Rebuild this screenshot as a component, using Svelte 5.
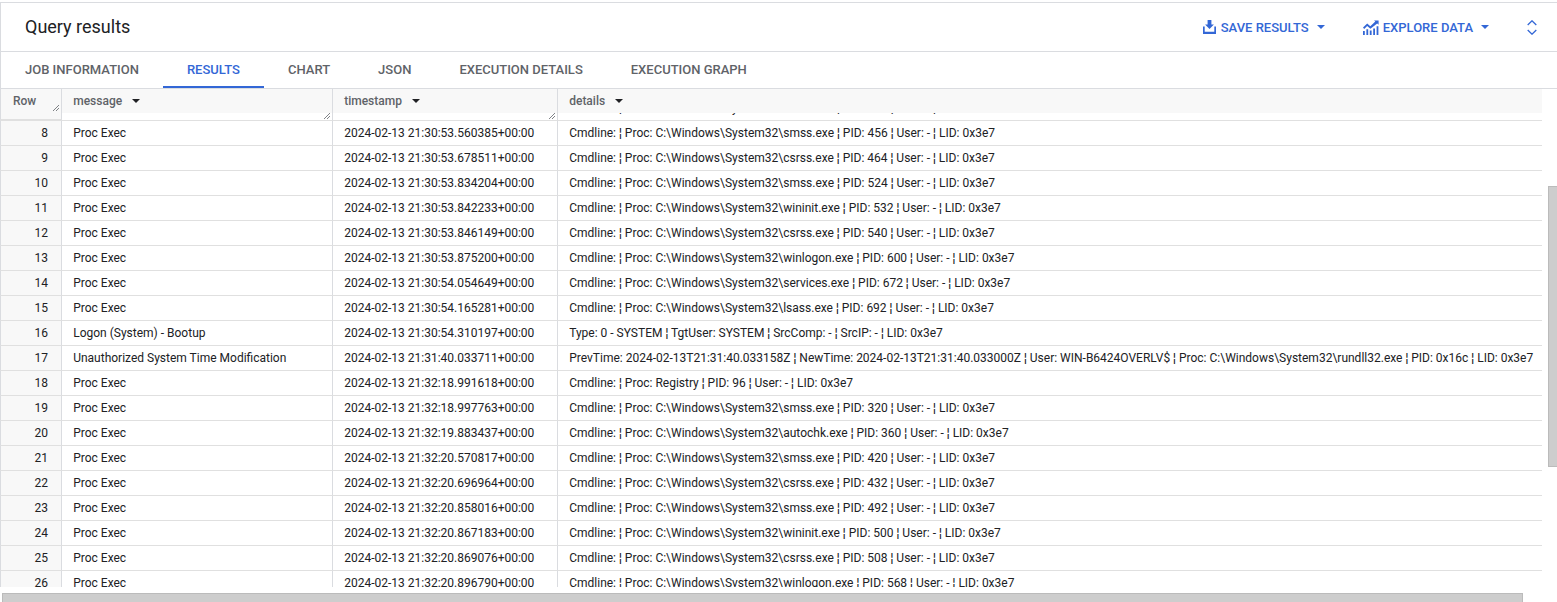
<script>
  const proc = (name, pid) => `Cmdline: ¦ Proc: ${name} ¦ PID: ${pid} ¦ User: - ¦ LID: 0x3e7`;
  const sys = name => `C:\\Windows\\System32\\${name}.exe`;

  const tabs = ["JOB INFORMATION", "RESULTS", "CHART", "JSON", "EXECUTION DETAILS", "EXECUTION GRAPH"];
  const columns = ["message", "timestamp", "details"];

  const rows = [
    [7, "Proc Exec", "2024-02-13 21:30:53.412907+00:00", proc(sys("smss"), 384)],
    [8, "Proc Exec", "2024-02-13 21:30:53.560385+00:00", proc(sys("smss"), 456)],
    [9, "Proc Exec", "2024-02-13 21:30:53.678511+00:00", proc(sys("csrss"), 464)],
    [10, "Proc Exec", "2024-02-13 21:30:53.834204+00:00", proc(sys("smss"), 524)],
    [11, "Proc Exec", "2024-02-13 21:30:53.842233+00:00", proc(sys("wininit"), 532)],
    [12, "Proc Exec", "2024-02-13 21:30:53.846149+00:00", proc(sys("csrss"), 540)],
    [13, "Proc Exec", "2024-02-13 21:30:53.875200+00:00", proc(sys("winlogon"), 600)],
    [14, "Proc Exec", "2024-02-13 21:30:54.054649+00:00", proc(sys("services"), 672)],
    [15, "Proc Exec", "2024-02-13 21:30:54.165281+00:00", proc(sys("lsass"), 692)],
    [16, "Logon (System) - Bootup", "2024-02-13 21:30:54.310197+00:00", "Type: 0 - SYSTEM ¦ TgtUser: SYSTEM ¦ SrcComp: - ¦ SrcIP: - ¦ LID: 0x3e7"],
    [17, "Unauthorized System Time Modification", "2024-02-13 21:31:40.033711+00:00", `PrevTime: 2024-02-13T21:31:40.033158Z ¦ NewTime: 2024-02-13T21:31:40.033000Z ¦ User: WIN-B6424OVERLV$ ¦ Proc: ${sys("rundll32")} ¦ PID: 0x16c ¦ LID: 0x3e7`],
    [18, "Proc Exec", "2024-02-13 21:32:18.991618+00:00", proc("Registry", 96)],
    [19, "Proc Exec", "2024-02-13 21:32:18.997763+00:00", proc(sys("smss"), 320)],
    [20, "Proc Exec", "2024-02-13 21:32:19.883437+00:00", proc(sys("autochk"), 360)],
    [21, "Proc Exec", "2024-02-13 21:32:20.570817+00:00", proc(sys("smss"), 420)],
    [22, "Proc Exec", "2024-02-13 21:32:20.696964+00:00", proc(sys("csrss"), 432)],
    [23, "Proc Exec", "2024-02-13 21:32:20.858016+00:00", proc(sys("smss"), 492)],
    [24, "Proc Exec", "2024-02-13 21:32:20.867183+00:00", proc(sys("wininit"), 500)],
    [25, "Proc Exec", "2024-02-13 21:32:20.869076+00:00", proc(sys("csrss"), 508)],
    [26, "Proc Exec", "2024-02-13 21:32:20.896790+00:00", proc(sys("winlogon"), 568)],
  ];
</script>

<div class="page">
  <header class="title-bar">
    <h2>Query results</h2>
    <div class="actions">
      <button class="action save">
        <svg width="13" height="14" viewBox="0 0 13 14">
          <path d="M4.6 0h3.8v4.4h2.5L6.5 8.9 2.1 4.4h2.5z" />
          <path d="M0 6.5h1.7v5.3h9.6V6.5H13V14H0z" />
        </svg>
        SAVE RESULTS
        <span class="caret"></span>
      </button>
      <button class="action explore">
        <svg width="16" height="15" viewBox="0 0 16 15">
          <path d="M0 7.6l4.2-4 3.1 2.6L12.3 1.6 11 .4h4.6v4.4l-1.4-1.4-6.8 5.4-3.2-2.7L1.2 9z" />
          <path d="M0 11h1.8v4H0zM3.4 9.2h1.8V15H3.4zM6.8 10.4h1.8V15H6.8zM10.200 8.600h1.800V15h-1.800zM13.600 6.200h1.800V15h-1.800z" />
        </svg>
        EXPLORE DATA
        <span class="caret"></span>
      </button>
      <button class="unfold" aria-label="Expand">
        <svg width="10" height="15" viewBox="0 0 10 15">
          <path d="M.7 5L5 .8 9.300 5M.7 10L5 14.200 9.300 10" />
        </svg>
      </button>
    </div>
  </header>

  <nav class="tabs">
    {#each tabs as tab}
      <div class="tab" class:active={tab === "RESULTS"}>{tab}</div>
    {/each}
  </nav>

  <div class="table">
    <div class="row head">
      <div class="cell num">
        Row
        <svg class="grip" width="6" height="6" viewBox="0 0 6 6"><path d="M0 6L6 0M3 6L6 3" /></svg>
      </div>
      {#each columns as col, i}
        <div class="cell">
          {col}<span class="caret dark"></span>
          {#if i < 2}
            <svg class="grip" width="6" height="6" viewBox="0 0 6 6"><path d="M0 6L6 0M3 6L6 3" /></svg>
          {/if}
        </div>
      {/each}
    </div>
    <div class="body">
      <div class="rows">
        {#each rows as [n, message, timestamp, details]}
          <div class="row">
            <div class="cell num">{n}</div>
            <div class="cell">{message}</div>
            <div class="cell">{timestamp}</div>
            <div class="cell">{details}</div>
          </div>
        {/each}
      </div>
    </div>
  </div>

  <div class="scrollbar vertical"></div>
  <div class="scrollbar horizontal"></div>
</div>

<style>
  :global(body) {
    margin: 0;
    background: #fff;
  }

  .page {
    position: relative;
    width: 1557px;
    height: 602px;
    overflow: hidden;
    box-sizing: border-box;
    padding-top: 2px;
    font-family: Roboto, "Liberation Sans", sans-serif;
    font-size: 12px;
    color: #202124;
  }

  .title-bar {
    display: flex;
    align-items: center;
    justify-content: space-between;
    height: 48px;
    border-top: 1px solid #dadce0;
    border-bottom: 1px solid #dadce0;
    border-left: 1px solid #dadce0;
    padding-left: 24px;
  }

  h2 {
    margin: 0 0 2px;
    font-size: 18px;
    font-weight: 400;
    color: #202124;
  }

  .actions {
    display: flex;
    align-items: center;
    padding-right: 20px;
  }

  button {
    display: flex;
    align-items: center;
    border: none;
    background: none;
    padding: 0;
    font: inherit;
    font-size: 13px;
    font-weight: 500;
    color: #3367d6;
  }

  button svg {
    fill: #3367d6;
  }

  .action svg {
    margin-right: 5px;
  }

  .action .caret {
    margin-left: 8px;
  }

  .save,
  .explore {
    margin-right: 38px;
  }

  .explore svg {
    margin-right: 4px;
  }

  .unfold svg {
    fill: none;
    stroke: #3367d6;
    stroke-width: 1.3;
  }

  .caret {
    display: inline-block;
    width: 0;
    height: 0;
    border-left: 4px solid transparent;
    border-right: 4px solid transparent;
    border-top: 4px solid #3367d6;
  }

  .caret.dark {
    border-top-color: #202124;
    margin-left: 10px;
    vertical-align: 2px;
  }

  .tabs {
    display: flex;
    height: 36px;
    border-left: 1px solid #dadce0;
    border-bottom: 1px solid #dadce0;
  }

  .tab {
    box-sizing: border-box;
    height: 36px;
    padding: 0 24px;
    line-height: 36px;
    font-size: 13px;
    font-weight: 500;
    color: #5f6368;
  }

  .tab.active {
    color: #3367d6;
    border-bottom: 2px solid #3367d6;
  }

  .table {
    width: 1542px;
  }

  .row {
    display: grid;
    grid-template-columns: 62px 271px 225px 984px;
    height: 25px;
  }

  .cell {
    position: relative;
    box-sizing: border-box;
    padding-left: 11.2px;
    border-right: 1px solid #dadce0;
    border-bottom: 1px solid #e0e0e0;
    line-height: 24px;
    white-space: nowrap;
    overflow: hidden;
  }

  .cell:last-child {
    border-right: none;
  }

  .cell.num {
    padding: 0 13px 0 0;
    text-align: right;
    background: #f8f8f8;
    border-left: 1px solid #dadce0;
  }

  .head {
    height: 24px;
    background: #f8f8f8;
    font-weight: 500;
    color: #5f6368;
  }

  .head .cell {
    border-bottom: none;
  }

  .head .cell.num {
    padding: 0 0 0 12px;
    text-align: left;
    overflow: visible;
    height: 31px;
    border-bottom: 1px solid #e0e0e0;
    z-index: 1;
  }

  .grip {
    position: absolute;
    right: 2px;
    bottom: 1px;
    fill: none;
    stroke: #5f6368;
    stroke-width: 0.8;
  }

  .head .num .grip {
    bottom: 8px;
  }

  .body {
    height: 474px;
    overflow: hidden;
  }

  .rows {
    margin-top: -17px;
  }

  .scrollbar {
    position: absolute;
    box-sizing: border-box;
    background: #cdcdcd;
    border: 1px solid #bbb;
  }

  .vertical {
    left: 1548px;
    top: 186px;
    width: 9px;
    height: 281px;
    border-right: none;
  }

  .horizontal {
    left: 2px;
    top: 593px;
    width: 1521px;
    height: 9px;
    border-bottom: none;
  }
</style>
